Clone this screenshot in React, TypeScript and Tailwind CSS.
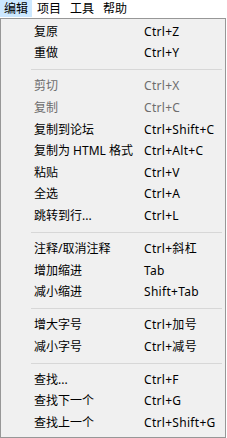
const font = { fontFamily: '"Noto Sans", "Noto Sans CJK SC", sans-serif' };

type Item = { label: string; key: string; disabled?: boolean } | "sep";

const items: Item[] = [
  { label: "复原", key: "Ctrl+Z" },
  { label: "重做", key: "Ctrl+Y" },
  "sep",
  { label: "剪切", key: "Ctrl+X", disabled: true },
  { label: "复制", key: "Ctrl+C", disabled: true },
  { label: "复制到论坛", key: "Ctrl+Shift+C" },
  { label: "复制为 HTML 格式", key: "Ctrl+Alt+C" },
  { label: "粘贴", key: "Ctrl+V" },
  { label: "全选", key: "Ctrl+A" },
  { label: "跳转到行...", key: "Ctrl+L" },
  "sep",
  { label: "注释/取消注释", key: "Ctrl+斜杠" },
  { label: "增加缩进", key: "Tab" },
  { label: "减小缩进", key: "Shift+Tab" },
  "sep",
  { label: "增大字号", key: "Ctrl+加号" },
  { label: "减小字号", key: "Ctrl+减号" },
  "sep",
  { label: "查找...", key: "Ctrl+F" },
  { label: "查找下一个", key: "Ctrl+G" },
  { label: "查找上一个", key: "Ctrl+Shift+G" },
];

export default function App() {
  return (
    <div className="w-[227px] h-[438px] bg-white text-[12px] text-black overflow-hidden" style={font}>
      <div className="flex h-[17px] items-center">
        <div className="w-[32px] h-[17px] bg-[#cce8ff] flex items-center pl-[4px]">编辑</div>
        <div className="w-[33px] pl-[5px]">项目</div>
        <div className="w-[33px] pl-[5px]">工具</div>
        <div className="w-[33px] pl-[5px]">帮助</div>
      </div>
      <div className="mt-[1px] w-[226px] h-[420px] border border-[#979797] bg-[#f0f0f0] pt-[2px]">
        {items.map((it, i) =>
          it === "sep" ? (
            <div key={i} className="h-[11.4px] flex items-center pl-[30px] pr-[3px]">
              <div className="h-px w-full bg-[#d7d7d7]" />
            </div>
          ) : (
            <div
              key={i}
              className={`h-[21.6px] flex items-center leading-none ${it.disabled ? "text-[#6d6d6d]" : ""}`}
            >
              <span className="w-[143px] shrink-0 pl-[33px] whitespace-nowrap">{it.label}</span>
              <span className="whitespace-nowrap tracking-[0.3px]">{it.key}</span>
            </div>
          )
        )}
      </div>
    </div>
  );
}
